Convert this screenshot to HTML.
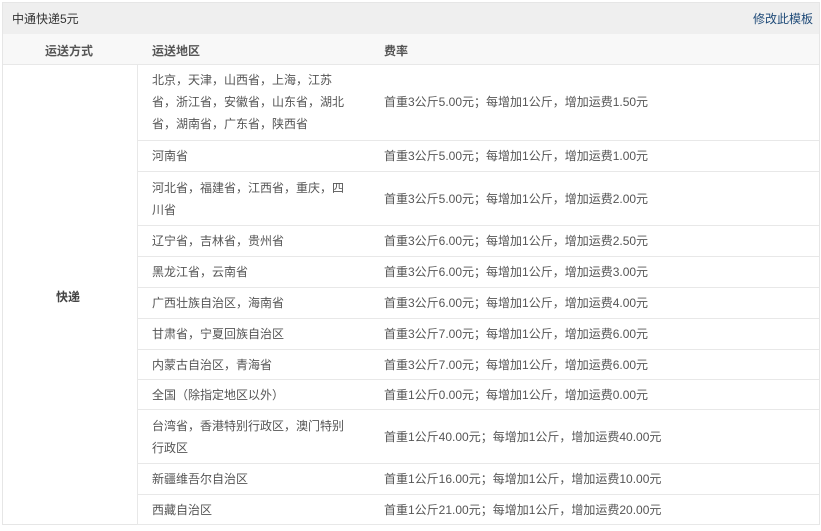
<!DOCTYPE html><html><head><meta charset="utf-8"><style>
body{margin:0;width:821px;height:531px;background:#fff;font-family:"Liberation Sans","SimSun","Noto Sans CJK SC",sans-serif;font-size:12px;color:#555;position:relative;overflow:hidden}
.a{position:absolute}
.top{left:2px;top:2px;width:817px;height:32px;background:#efefef}
.hd{left:2px;top:34px;width:817px;height:30px;background:#f8f8f8;border-bottom:1px solid #e8e8e8;font-weight:bold}
.frame{left:2px;top:2px;width:816px;height:521px;border:1px solid #e6e6e6}
.r{left:137px;width:682px;border-bottom:1px solid #e8e8e8}
.r div{position:absolute;display:flex;align-items:center;height:100%;line-height:22px}
.c2{left:15px;width:200px}.c3{left:247px;white-space:nowrap}
</style></head><body>
<div class="a top"></div>
<div class="a" style="left:12px;top:10px;color:#333">中通快递5元</div>
<div class="a" style="left:753px;top:10px;color:#1e4a78">修改此模板</div>
<div class="a hd"><span class="a" style="left:43px;top:8px">运送方式</span><span class="a" style="left:150px;top:8px">运送地区</span><span class="a" style="left:382px;top:8px">费率</span></div>
<div class="a frame"></div>
<div class="a" style="left:137px;top:64px;width:1px;height:460px;background:#e8e8e8"></div>
<div class="a" style="left:56px;top:288px;font-weight:bold;color:#444">快递</div>
<div class="a r" style="top:64px;height:76px"><div class="c2">北京，天津，山西省，上海，江苏省，浙江省，安徽省，山东省，湖北省，湖南省，广东省，陕西省</div><div class="c3">首重3公斤5.00元；每增加1公斤，增加运费1.50元</div></div>
<div class="a r" style="top:141px;height:30px"><div class="c2">河南省</div><div class="c3">首重3公斤5.00元；每增加1公斤，增加运费1.00元</div></div>
<div class="a r" style="top:172px;height:53px"><div class="c2">河北省，福建省，江西省，重庆，四川省</div><div class="c3">首重3公斤5.00元；每增加1公斤，增加运费2.00元</div></div>
<div class="a r" style="top:226px;height:30px"><div class="c2">辽宁省，吉林省，贵州省</div><div class="c3">首重3公斤6.00元；每增加1公斤，增加运费2.50元</div></div>
<div class="a r" style="top:257px;height:30px"><div class="c2">黑龙江省，云南省</div><div class="c3">首重3公斤6.00元；每增加1公斤，增加运费3.00元</div></div>
<div class="a r" style="top:288px;height:30px"><div class="c2">广西壮族自治区，海南省</div><div class="c3">首重3公斤6.00元；每增加1公斤，增加运费4.00元</div></div>
<div class="a r" style="top:319px;height:30px"><div class="c2">甘肃省，宁夏回族自治区</div><div class="c3">首重3公斤7.00元；每增加1公斤，增加运费6.00元</div></div>
<div class="a r" style="top:350px;height:29px"><div class="c2">内蒙古自治区，青海省</div><div class="c3">首重3公斤7.00元；每增加1公斤，增加运费6.00元</div></div>
<div class="a r" style="top:380px;height:29px"><div class="c2">全国（除指定地区以外）</div><div class="c3">首重1公斤0.00元；每增加1公斤，增加运费0.00元</div></div>
<div class="a r" style="top:410px;height:53px"><div class="c2">台湾省，香港特别行政区，澳门特别行政区</div><div class="c3">首重1公斤40.00元；每增加1公斤，增加运费40.00元</div></div>
<div class="a r" style="top:464px;height:30px"><div class="c2">新疆维吾尔自治区</div><div class="c3">首重1公斤16.00元；每增加1公斤，增加运费10.00元</div></div>
<div class="a r" style="top:495px;height:29px"><div class="c2">西藏自治区</div><div class="c3">首重1公斤21.00元；每增加1公斤，增加运费20.00元</div></div>
</body></html>
